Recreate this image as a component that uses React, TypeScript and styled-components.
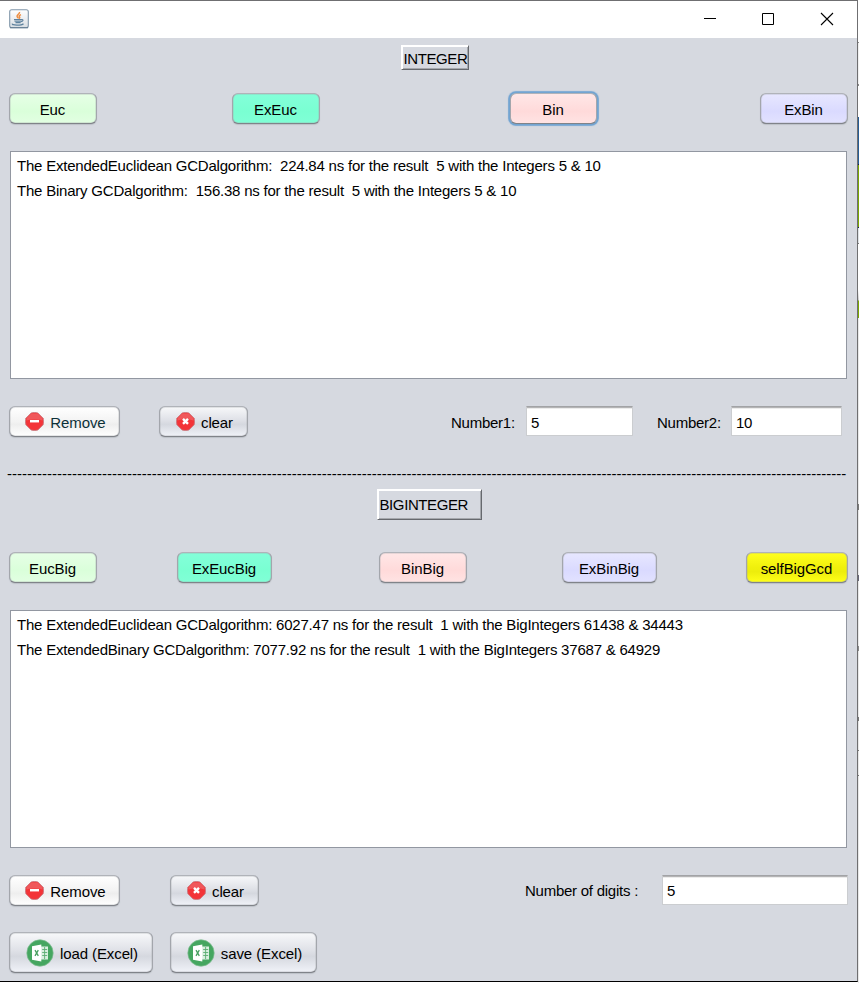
import React from "react";
import styled, { createGlobalStyle, css } from "styled-components";

const GlobalStyle = createGlobalStyle`
  *, *::before, *::after { box-sizing: border-box; }
  html, body { margin: 0; padding: 0; background: #fff; }
  body, button, input { font: 15px/18px "Liberation Sans", Arial, sans-serif; color: #000; }
`;

const Desktop = styled.div`
  display: grid;
  grid-template-columns: 858px 1px;
  width: 859px;
  height: 983px;
  overflow: hidden;
`;

const Backdrop = styled.div`
  background: linear-gradient(
    #fff 0 42px, #8a8a8a 42px 43px, #f0f0f0 43px 84px, #8a8a8a 84px 86px,
    #fff 86px 117px, #265c94 117px 164px, #101a50 164px 165px,
    #7aa600 165px 227px, #101a50 227px 228px, #dfe3e6 228px 243px,
    #777 243px 244px, #fff 244px 290px, #ccc 300px, #7aa600 301px 318px,
    #e8e8e8 318px 504px, #777 504px 510px, #e8e8e8 510px 575px,
    #667 575px 581px, #e8e8e8 581px 646px, #888 646px 651px,
    #e8e8e8 651px 717px, #777 717px 721px, #e8e8e8 721px 750px,
    #777 750px 751px, #e8e8e8 751px 775px, #777 775px 776px, #e8e8e8 776px
  );
`;

const Window = styled.main`
  display: flex;
  flex-direction: column;
  height: 982px;
  background: #d6d9e0;
  border-top: 1px solid #6f6f71;
  border-right: 1px solid #6f6f71;
  border-bottom: 1px solid #000;
`;

const TitleBar = styled.header`
  display: flex;
  align-items: center;
  justify-content: space-between;
  height: 37px;
  padding: 0 23px 2px 9px;
  background: #fff;
`;

const Controls = styled.div`
  display: flex;
  align-items: center;
  gap: 45px;
  svg { display: block; }
`;

const Section = styled.section<{ $height: number }>`
  height: ${(p) => p.$height}px;
  padding: 0 9px;
`;

const Heading = styled.div<{ $width: number; $height: number; $left: number; $drop?: number }>`
  display: flex;
  align-items: center;
  width: ${(p) => p.$width}px;
  height: ${(p) => p.$height}px;
  margin-left: ${(p) => p.$left}px;
  padding: ${(p) => p.$drop ?? 1}px 0 0 1.5px;
  border: 1px solid;
  border-color: #fff #66696e #66696e #fff;
  box-shadow: inset 1px 1px #fff, inset -1px -1px #a5a8ad;
  letter-spacing: -0.4px;
  white-space: nowrap;
`;

const Row = styled.div<{ $top: number }>`
  display: flex;
  align-items: flex-start;
  margin-top: ${(p) => p.$top}px;
`;

const tones = {
  green: "linear-gradient(#e6ffe6, #daffda 60%, #e2ffe2)",
  mint: "linear-gradient(#83ffd9, #7affd2 60%, #80ffd6)",
  pink: "linear-gradient(#ffe7e7, #ffdada 60%, #ffe3e3)",
  lilac: "linear-gradient(#e7e7ff, #dadaff 60%, #e2e2ff)",
  yellow: "linear-gradient(#ffff1e, #f0f00c 50%, #eded0c 65%, #ffff18)",
  white: "linear-gradient(#ffffff, #f3f3f3 50%, #eeeeee 60%, #ffffff)",
  grey: "linear-gradient(#f7f8fa, #dfe1e7 45%, #d5d8df 60%, #f0f2f8)",
};

const focusRing = css`
  box-shadow: 0 0 0 1.6px #73a4d1, 0 0 1px 2px #8fb4d8;
`;

const Button = styled.button<{
  $w: number;
  $left?: number;
  $h?: number;
  $tone: keyof typeof tones;
  $focus?: boolean;
  $ink?: string;
}>`
  display: flex;
  flex: none;
  align-items: center;
  justify-content: center;
  gap: 6px;
  width: ${(p) => p.$w}px;
  height: ${(p) => p.$h ?? 31}px;
  margin: 0 0 0 ${(p) => p.$left ?? 0}px;
  padding: 2px 1px 0 0;
  border: 1px solid;
  border-color: #b0b3b9 #a3a6ac #808389 #a3a6ac;
  border-radius: 6px;
  background: ${(p) => tones[p.$tone]} padding-box, #a6a9ae;
  box-shadow: 0 1px 1px #bcc0c7, inset 0 0 0 1px #a1a4a944;
  color: ${(p) => p.$ink ?? "#000"};
  letter-spacing: -0.1px;
  white-space: nowrap;
  ${(p) => p.$focus && focusRing}
  &:has(svg) { padding-left: 3px; }
  svg { display: block; flex: none; margin-top: -2px; }
`;

const List = styled.ul<{ $height: number; $top: number }>`
  width: 837px;
  height: ${(p) => p.$height}px;
  margin: ${(p) => p.$top}px 0 0 1px;
  padding: 1px 6px;
  border: 1px solid #9297a1;
  background: #fff;
  list-style: none;
`;

const Item = styled.li`
  height: 25px;
  line-height: 25px;
  letter-spacing: -0.215px;
  white-space: pre;
`;

const Label = styled.label<{ $left: number; $w: number; $raised?: boolean }>`
  flex: none;
  width: ${(p) => p.$w}px;
  margin-left: ${(p) => p.$left}px;
  padding-top: ${(p) => (p.$raised ? 7 : 8)}px;
  letter-spacing: -0.25px;
  white-space: nowrap;
`;

const Field = styled.input<{ $w: number; $raised?: boolean }>`
  flex: none;
  width: ${(p) => p.$w}px;
  height: 30px;
  margin: 0;
  padding: ${(p) => (p.$raised ? "1px 0 0 4px" : "3px 0 0 4px")};
  border: 1px solid #cbcdd0;
  border-top: 1px solid #a2a3a6;
  border-radius: 0;
  background: #fff;
  box-shadow: inset 0 1px #b4b4b5, inset 0 2px #ececec;
  letter-spacing: -0.25px;
  outline: none;
`;

const Divider = styled.div`
  height: 18px;
  margin-left: -2px;
  white-space: nowrap;
`;

const JavaIcon = () => (
  <svg width="20" height="20" viewBox="0 0 20 20" fill="none">
    <defs>
      <linearGradient id="tile" x2="0" y2="1">
        <stop stopColor="#fff" />
        <stop offset="1" stopColor="#d9dee3" />
      </linearGradient>
    </defs>
    <rect x=".7" y=".7" width="18.6" height="18" rx="2" fill="url(#tile)" stroke="#8197aa" strokeWidth="1.1" />
    <path d="M1 18.7h18" stroke="#617a90" />
    <path d="M10.5 3c.5 2-3 2.5-2.4 4.6.2.8 1.2 1.3 1.2 2M12 5.6c-2 .8-2.2 1.7-1.4 2.5.5.6.2 1.1-.5 1.7" stroke="#ee8e42" strokeWidth="1.5" />
    <path d="M5 10.6h8M5.5 12.2h7M6.5 13.6h5.2M12.5 10.8c2-.8 2.4 1.3-.6 2" stroke="#5e829e" strokeWidth="1.1" />
    <path d="M3.5 14.6c-1.4 2 9 2 11 .1" stroke="#5e829e" strokeWidth="1.3" />
  </svg>
);

const StopIcon = ({ cross = false }: { cross?: boolean }) => (
  <svg width="19" height="19" viewBox="0 0 19 19">
    <path d="M6.2 .9Q9.5 0 12.8 .9L18.1 6.2Q19 9.5 18.1 12.8L12.8 18.1Q9.5 19 6.2 18.1L.9 12.8Q0 9.5 .9 6.2z" fill="#f33438" stroke="#c9777e" strokeWidth=".9" strokeLinejoin="round" />
    <path d="M6.2 1.5h6.6L17.4 6v2.5Q9.5 6 1.6 8.5V6z" fill="#f0585b" />
    {cross ? (
      <path d="M7 6.8l5 5M12 6.8l-5 5" stroke="#fff" strokeWidth="2.4" />
    ) : (
      <path d="M5 9.2h9" stroke="#fff" strokeWidth="2.5" />
    )}
  </svg>
);

const ExcelIcon = () => (
  <svg width="28" height="28" viewBox="0 0 28 28">
    <circle cx="14" cy="14" r="13.2" fill="#45a660" stroke="#82bd93" strokeWidth=".7" />
    <path d="M15 7.5h7v13h-7z" fill="#d9eee0" />
    <path d="M16.2 10.5h5M16.2 13.5h5M16.2 16.5h5M18.6 8v12" stroke="#5bae73" strokeWidth=".9" />
    <path d="M6 7.2l9.3-1.7v17L6 20.8z" fill="#fff" />
    <path d="M9 11.2l3.3 5.6M12.3 11.2L9 16.8" stroke="#459e5e" strokeWidth="1.3" />
  </svg>
);

export default function App() {
  return (
    <Desktop>
      <GlobalStyle />
      <Window>
        <TitleBar>
          <JavaIcon />
          <Controls>
            <svg width="14" height="14"><path d="M2 6.5h12" stroke="#000" /></svg>
            <svg width="14" height="14"><path d="M1.5 1.5h11v11h-11z" fill="none" stroke="#000" /></svg>
            <svg width="14" height="14"><path d="M1 1l12 12M13 1L1 13" stroke="#000" strokeWidth="1.1" /></svg>
          </Controls>
        </TitleBar>

        <Section $height={427}>
          <Row $top={7}><Heading $width={68} $height={25} $left={392} $drop={3}>INTEGER</Heading></Row>
          <Row $top={23}>
            <Button $w={88} $tone="green">Euc</Button>
            <Button $w={88} $left={135} $tone="mint">ExEuc</Button>
            <Button $w={87} $left={190} $tone="pink" $focus>Bin</Button>
            <Button $w={88} $left={163} $tone="lilac">ExBin</Button>
          </Row>
          <List $height={228} $top={27}>
            <Item>{"The ExtendedEuclidean GCDalgorithm:  224.84 ns for the result  5 with the Integers 5 & 10"}</Item>
            <Item>{"The Binary GCDalgorithm:  156.38 ns for the result  5 with the Integers 5 & 10"}</Item>
          </List>
          <Row $top={27}>
            <Button $w={111} $tone="white" $ink="#0c3038"><StopIcon />Remove</Button>
            <Button $w={89} $left={39} $tone="grey"><StopIcon cross />clear</Button>
            <Label $left={203} $w={75}>Number1:</Label>
            <Field $w={107} defaultValue="5" />
            <Label $left={24} $w={74}>Number2:</Label>
            <Field $w={111} defaultValue="10" />
          </Row>
        </Section>

        <Section $height={516}>
          <Divider>{"-".repeat(168)}</Divider>
          <Row $top={6}><Heading $width={105} $height={31} $left={368}>BIGINTEGER</Heading></Row>
          <Row $top={32}>
            <Button $w={88} $tone="green">EucBig</Button>
            <Button $w={95} $left={80} $tone="mint">ExEucBig</Button>
            <Button $w={88} $left={107} $tone="pink">BinBig</Button>
            <Button $w={95} $left={95} $tone="lilac">ExBinBig</Button>
            <Button $w={102} $left={89} $tone="yellow">selfBigGcd</Button>
          </Row>
          <List $height={238} $top={27}>
            <Item>{"The ExtendedEuclidean GCDalgorithm: 6027.47 ns for the result  1 with the BigIntegers 61438 & 34443"}</Item>
            <Item>{"The ExtendedBinary GCDalgorithm: 7077.92 ns for the result  1 with the BigIntegers 37687 & 64929"}</Item>
          </List>
          <Row $top={27}>
            <Button $w={111} $h={31} $tone="white"><StopIcon />Remove</Button>
            <Button $w={89} $left={50} $tone="grey"><StopIcon cross />clear</Button>
            <Label $left={266} $w={137} $raised>Number of digits :</Label>
            <Field $w={186} $raised defaultValue="5" />
          </Row>
          <Row $top={26}>
            <Button $w={144} $h={41} $tone="grey"><ExcelIcon />load (Excel)</Button>
            <Button $w={147} $h={41} $left={17} $tone="grey"><ExcelIcon />save (Excel)</Button>
          </Row>
        </Section>
      </Window>
      <Backdrop />
    </Desktop>
  );
}
